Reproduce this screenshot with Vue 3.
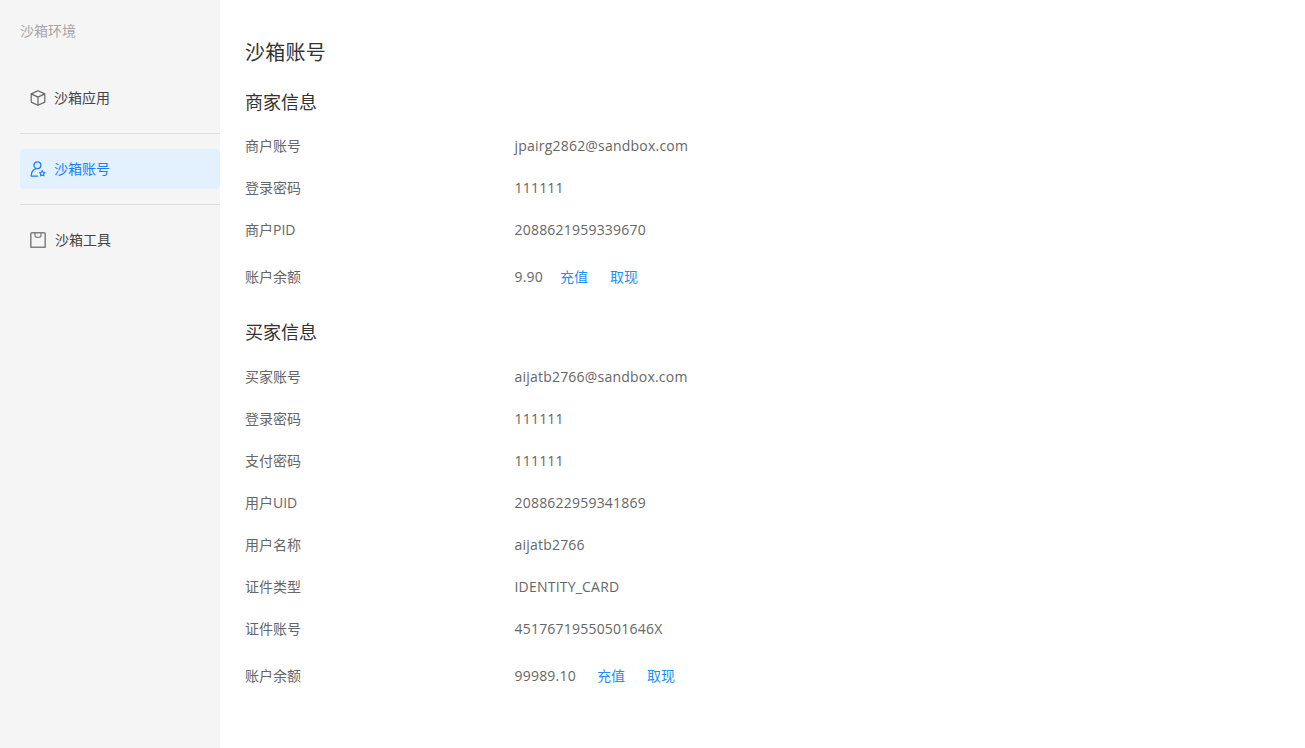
<script setup>
const merchant = [
  { label: '商户账号', value: 'jpairg2862@sandbox.com' },
  { label: '登录密码', value: '111111' },
  { label: '商户PID', value: '2088621959339670' },
]
const buyer = [
  { label: '买家账号', value: 'aijatb2766@sandbox.com' },
  { label: '登录密码', value: '111111' },
  { label: '支付密码', value: '111111' },
  { label: '用户UID', value: '2088622959341869' },
  { label: '用户名称', value: 'aijatb2766' },
  { label: '证件类型', value: 'IDENTITY_CARD' },
  { label: '证件账号', value: '45176719550501646X' },
]
</script>

<template>
  <div class="page">
    <aside class="side">
      <div class="side-title">沙箱环境</div>
      <nav class="nav">
        <a class="item">
          <svg class="ico" viewBox="0 0 16 16" fill="none" stroke="#666" stroke-width="1.2" stroke-linejoin="round">
            <path d="M8 .7 14.8 3.900v8.200L8 15.300 1.200 12.100V3.900Z" />
            <path d="M1.200 3.900 8 7.100l6.800-3.200M8 7.100v8.200" />
          </svg>
          <span class="txt">沙箱应用</span>
        </a>
        <div class="divider"></div>
        <a class="item active">
          <svg class="ico" viewBox="0 0 16 16" fill="none" stroke="currentColor" stroke-width="1.3" stroke-linejoin="round" stroke-linecap="round">
            <circle cx="7.400" cy="4.200" r="3.400" />
            <path d="M1.200 15.200c0-3.600 1.400-6 4.200-7.300M1.200 15.200h6.400" />
            <path d="m12.200 9.600.9 1.700 1.900.3-1.400 1.300.4 1.900-1.800-.9-1.700.9.3-1.900-1.300-1.300 1.900-.3Z" stroke-width="1.100" />
          </svg>
          <span class="txt">沙箱账号</span>
        </a>
        <div class="divider"></div>
        <a class="item tool">
          <svg class="ico" viewBox="0 0 16 16" fill="none" stroke="#808080" stroke-width="1.5" stroke-linejoin="round">
            <path d="M2 .8h12c.7 0 1.200.5 1.200 1.200v13.200H.8V2C.8 1.300 1.300.8 2 .8Z" />
            <path d="M5 1v2.400c0 2.500 6 2.500 6 0V1" stroke-width="1.300" />
          </svg>
          <span class="txt">沙箱工具</span>
        </a>
      </nav>
    </aside>
    <main class="main">
      <h1 class="title">沙箱账号</h1>
      <h2 class="head">商家信息</h2>
      <div v-for="r in merchant" :key="r.label" class="row">
        <span class="label">{{ r.label }}</span>
        <span class="value">{{ r.value }}</span>
      </div>
      <div class="row balance">
        <span class="label">账户余额</span>
        <span class="value">9.90</span>
        <a class="link first">充值</a>
        <a class="link">取现</a>
      </div>
      <h2 class="head second">买家信息</h2>
      <div v-for="r in buyer" :key="r.label + r.value" class="row">
        <span class="label">{{ r.label }}</span>
        <span class="value">{{ r.value }}</span>
      </div>
      <div class="row balance wide">
        <span class="label">账户余额</span>
        <span class="value">99989.10</span>
        <a class="link first">充值</a>
        <a class="link">取现</a>
      </div>
    </main>
  </div>
</template>

<style>
html, body { margin: 0; background: #fff; }
</style>

<style scoped>
.page {
  display: flex;
  height: 748px;
  overflow: hidden;
  font-family: "Open Sans", "Noto Sans CJK SC", sans-serif;
  font-size: 14px;
  color: #666;
}
.side {
  width: 220px;
  flex: none;
  box-sizing: border-box;
  background: #f5f5f5;
  padding: 21px 0 0 20px;
}
.side-title {
  height: 20px;
  line-height: 20px;
  color: #a6a6a6;
}
.nav { margin-top: 37px; }
.item {
  display: flex;
  align-items: center;
  gap: 8px;
  height: 40px;
  padding-left: 10px;
  border-radius: 4px;
  color: #444;
}
.item.active {
  background: #e3f1ff;
  color: #1a7fff;
}
.item.tool { gap: 9px; }
.txt { padding-bottom: 2px; }
.ico { width: 16px; height: 16px; flex: none; }
.divider {
  height: 1px;
  margin: 15px 0;
  background: #dedede;
}
.main {
  flex: 1;
  padding: 39px 0 0 25px;
}
.title {
  margin: 0;
  height: 28px;
  line-height: 28px;
  font-size: 20px;
  letter-spacing: 0.25px;
  font-weight: 400;
  color: #333;
}
.head {
  margin: 22px 0 10px;
  height: 26px;
  line-height: 26px;
  font-size: 18px;
  font-weight: 400;
  color: #333;
}
.head.second { margin: 16px 0 11px; }
.row {
  display: flex;
  align-items: center;
  box-sizing: border-box;
  height: 42px;
  padding-bottom: 2px;
}
.row.balance { height: 52px; }
.label { width: 269.5px; flex: none; }
.value { letter-spacing: 0.21px; }
.link { color: #1890ff; margin-left: 22px; }
.link.first { margin-left: 17px; }
.wide .link.first { margin-left: 21px; }
</style>
